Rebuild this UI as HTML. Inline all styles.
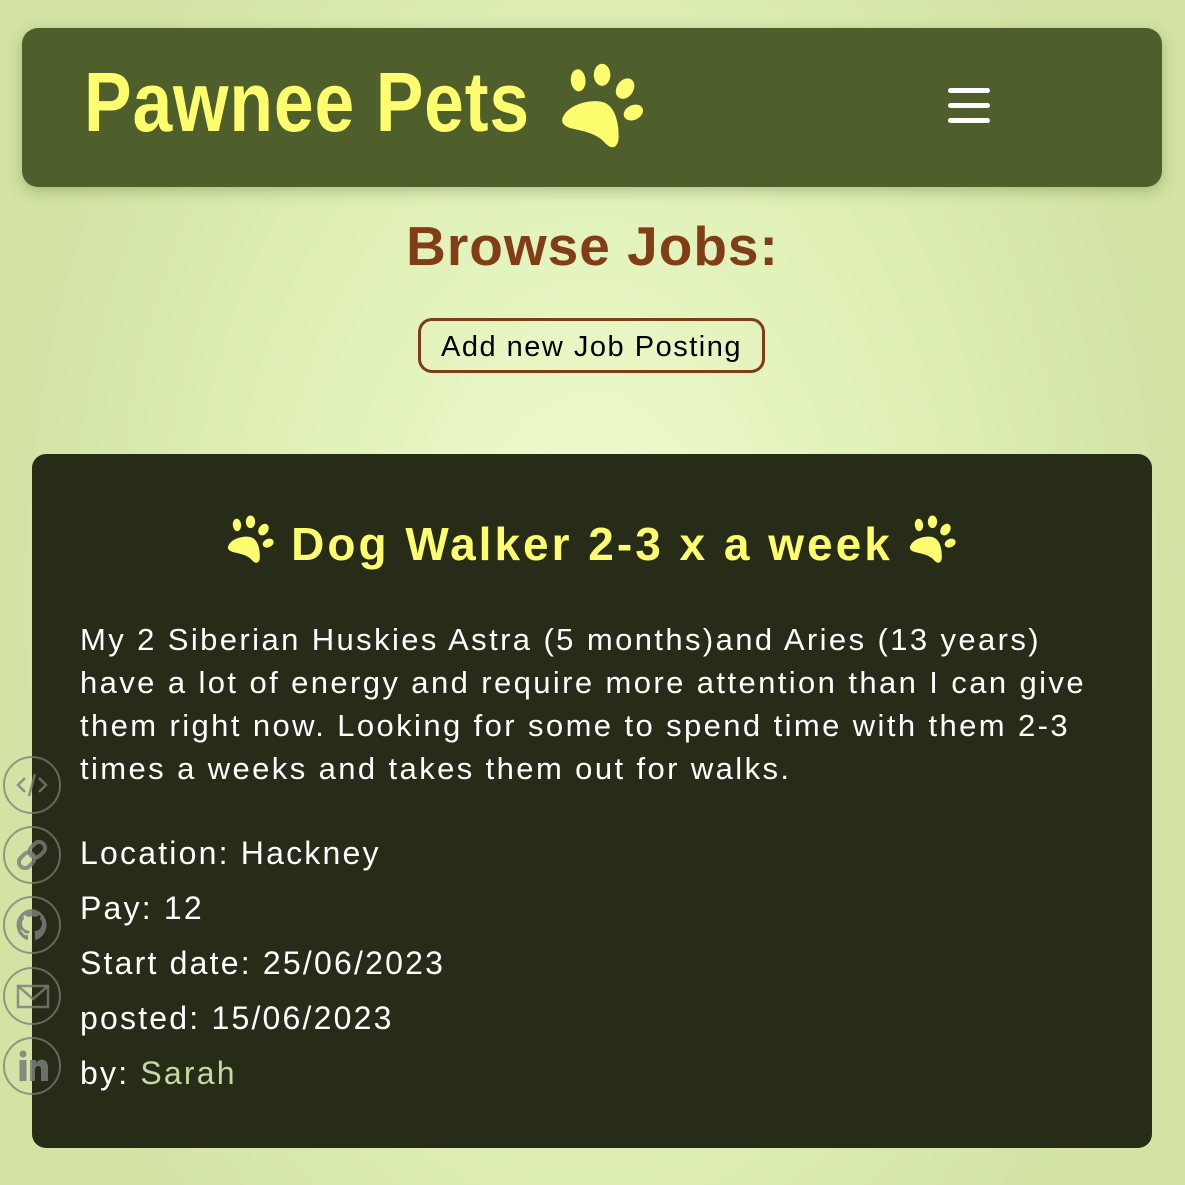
<!DOCTYPE html>
<html><head><meta charset="utf-8"><style>
*{margin:0;padding:0;box-sizing:border-box}
html,body{width:1185px;height:1185px;overflow:hidden}
body{font-family:"Liberation Sans",sans-serif;position:relative;
background:radial-gradient(ellipse 600px 900px at 592px 600px,#f1fdd0 0%,#e2f2bb 45%,#d2e3a4 100%);}
.hdr{position:absolute;left:22px;top:28px;width:1140px;height:159px;background:#4e5f2b;border-radius:16px;box-shadow:0 4px 14px rgba(80,110,30,.35)}
.logo{position:absolute;left:84px;top:52px;font-size:84px;font-weight:bold;color:#fdfd6f;letter-spacing:1px;transform:scaleX(.85);transform-origin:left top;white-space:nowrap;line-height:100px}
.hdr .paw{position:absolute;left:535px;top:33px;width:92px;height:92px}
.burger{position:absolute;left:926px;top:60px;width:42px}
.burger div{height:5px;background:#fff;border-radius:3px;margin-bottom:10px}
h1{position:absolute;left:0;width:1185px;top:214px;text-align:center;font-size:55px;color:#813d16;font-weight:bold;letter-spacing:1px}
.btn{position:absolute;left:418px;top:318px;width:347px;height:55px;border:3px solid #7f3d17;border-radius:14px;font-size:29px;letter-spacing:1.5px;text-align:center;line-height:52px;color:#000;white-space:nowrap}
.card{position:absolute;left:32px;top:454px;width:1120px;height:694px;background:#262c17;border-radius:14px;color:#fff}
.title{position:absolute;left:0;width:1120px;top:60px;text-align:center;font-size:46px;font-weight:bold;color:#fdfd6f;white-space:nowrap;letter-spacing:3px}
.title svg{width:52px;height:52px;vertical-align:-6px;margin:0 14px}
.desc{position:absolute;left:48px;top:164px;font-size:31px;letter-spacing:2.4px;line-height:43px;white-space:nowrap}
.info{position:absolute;left:48px;top:372px;font-size:32px;letter-spacing:2.2px;line-height:55px;white-space:nowrap}
.info span{color:#c6d9a0}
.soc{position:absolute;left:3px;width:58px;height:58px;border:2px solid rgba(120,125,120,.75);border-radius:50%}
.soc svg{position:absolute;left:0;top:0;width:54px;height:54px}
</style></head><body>
<svg width="0" height="0" style="position:absolute"><defs>
<symbol id="paw" viewBox="0 0 90 100">
<ellipse cx="18" cy="21" rx="8" ry="12" transform="rotate(-5 18 21)"/>
<ellipse cx="44" cy="15" rx="9" ry="12"/>
<ellipse cx="69" cy="30" rx="9" ry="12" transform="rotate(35 69 30)"/>
<ellipse cx="78" cy="56" rx="11" ry="8" transform="rotate(-25 78 56)"/>
<path d="M2 60 C8 48 28 42 42 44 C56 46 62 62 62 82 C62 94 55 97 48 90 C40 80 28 77 14 74 C2 72 -2 66 2 60Z"/>
</symbol></defs></svg>
<div class="hdr">
<svg class="paw" fill="#fdfd6f"><use href="#paw"/></svg>
<div class="burger"><div></div><div></div><div></div></div>
</div>
<div class="logo">Pawnee Pets</div>
<h1>Browse Jobs:</h1>
<div class="btn">Add new Job Posting</div>
<div class="card">
<div class="title"><svg fill="#fdfd6f"><use href="#paw"/></svg>Dog Walker 2-3 x a week<svg fill="#fdfd6f"><use href="#paw"/></svg></div>
<div class="desc">My 2 Siberian Huskies Astra (5 months)and Aries (13 years)<br>have a lot of energy and require more attention than I can give<br>them right now. Looking for some to spend time with them 2-3<br>times a weeks and takes them out for walks.</div>
<div class="info">Location: Hackney<br>Pay: 12<br>Start date: 25/06/2023<br>posted: 15/06/2023<br>by: <span>Sarah</span></div>
</div>
<div class="soc" style="top:756px"><svg viewBox="0 0 54 54" fill="none" stroke="rgba(120,125,120,.8)" stroke-width="2.5"><path d="M20 20 L13 27 L20 34 M34 20 L41 27 L34 34 M30 16 L24 38"/></svg></div>
<div class="soc" style="top:826px"><svg viewBox="0 0 54 54" fill="none" stroke="rgba(120,125,120,.8)" stroke-width="4"><g transform="rotate(45 27 27)"><rect x="21" y="11" width="12" height="17" rx="6"/><rect x="21" y="26" width="12" height="17" rx="6"/></g></svg></div>
<div class="soc" style="top:896px"><svg viewBox="0 0 54 54"><path fill="rgba(120,125,120,.85)" d="M27 11a16 16 0 0 0-5 31c1 0 1-1 1-1v-4c-4 1-5-2-5-2-1-2-2-2-2-2-1-1 0-1 0-1 2 0 3 2 3 2 1 2 4 2 5 1 0-1 1-2 1-2-4 0-8-2-8-8 0-2 1-3 2-4 0-1-1-2 0-4 0 0 1 0 4 2a14 14 0 0 1 8 0c3-2 4-2 4-2 1 2 0 3 0 4 1 1 2 2 2 4 0 6-4 8-8 8 1 1 1 2 1 3v5s0 1 1 1a16 16 0 0 0-5-31z"/></svg></div>
<div class="soc" style="top:967px"><svg viewBox="0 0 54 54" fill="none" stroke="rgba(120,125,120,.8)" stroke-width="2.5"><rect x="13" y="17" width="30" height="21"/><path d="M13 17 L28 30 L43 17"/></svg></div>
<div class="soc" style="top:1037px"><svg viewBox="0 0 54 54" fill="rgba(120,125,120,.85)"><circle cx="18" cy="15" r="3.5"/><rect x="14.5" y="21" width="7" height="21"/><path d="M25 21h6v3c2-3 5-4 8-3 3 1 4 4 4 8v13h-7V31c0-3-1-4-3-4s-3 2-3 4v11h-5z"/></svg></div>
</body></html>
